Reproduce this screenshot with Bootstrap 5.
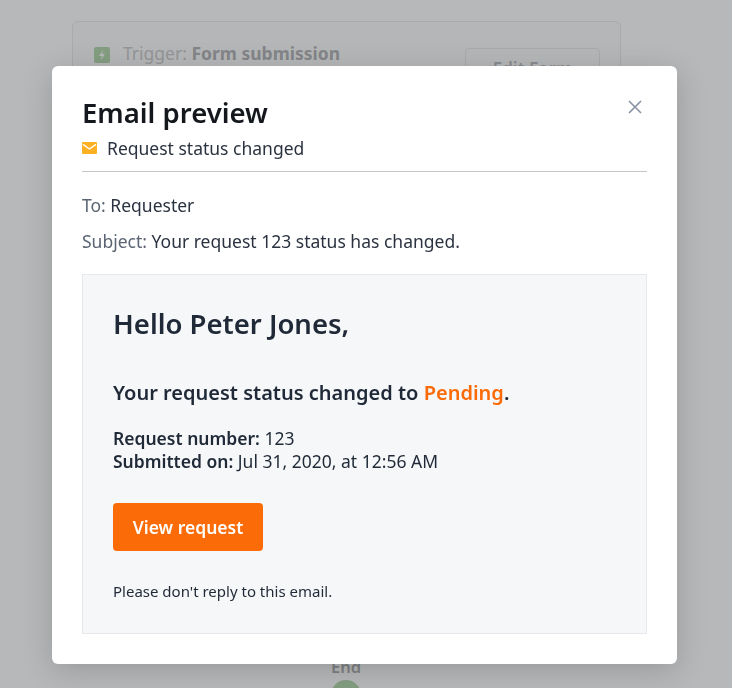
<!DOCTYPE html>
<html lang="en">
<head>
    <meta charset="UTF-8">
    <meta name="viewport" content="width=device-width, initial-scale=1.0">
    <title>Email preview</title>
    <link href="https://cdn.jsdelivr.net/npm/bootstrap@5.3.0/dist/css/bootstrap.min.css" rel="stylesheet">
    <style>
        html, body {
            height: 100%;
            overflow: hidden;
        }
        body {
            font-family: "Noto Sans", sans-serif;
            background: #fff;
            color: #1f2937;
        }
        .page-back {
            padding: 21px 111px 0 72px;
            height: 688px;
            opacity: 0.5;
        }
        .trigger-box {
            height: 200px;
            border: 1px solid #d5d7dc;
            border-radius: 6px;
            padding: 19px 20px;
            background: #fdfdfd;
        }
        .trigger-icon {
            width: 16px;
            height: 16px;
            background: #6cb560;
            border-radius: 2px;
            margin-top: 6px;
        }
        .trigger-label {
            font-size: 17.5px;
            line-height: 24px;
            color: #9a9ca1;
            gap: 13px;
            margin-left: 1px;
        }
        .trigger-label b {
            color: #696c72;
            font-weight: 700;
        }
        .edit-btn {
            width: 135px;
            height: 50px;
            margin-top: 7px;
            border: 1px solid #d5d7dc;
            border-radius: 4px;
            font-size: 17px;
            font-weight: 600;
            color: #7b7f88;
            text-align: center;
            padding-top: 7px;
        }
        .end-block {
            margin-top: 435px;
            font-size: 16.5px;
            font-weight: 600;
            line-height: 22px;
            color: #5b5f66;
            padding-left: 259px;
        }
        .end-dot {
            width: 30px;
            height: 30px;
            margin: 2px 0 0 0;
            background: #6cb560;
            border-radius: 50%;
        }
        .overlay {
            position: fixed;
            inset: 0;
            background: rgba(31, 33, 37, 0.32);
        }
        .preview-dialog {
            position: absolute;
            left: 52px;
            top: 66px;
            width: 625px;
            height: 598px;
            background: #fff;
            border-radius: 6px;
            padding: 29px 30px 30px;
            box-shadow: 0 6px 30px rgba(0, 0, 0, 0.18);
        }
        .preview-title {
            font-size: 27.5px;
            font-weight: 600;
            line-height: 36px;
            color: #14171c;
            margin: 0;
        }
        .preview-sub {
            font-size: 17.5px;
            line-height: 24px;
            margin-top: 5px;
            padding-bottom: 11px;
            border-bottom: 1px solid #c4c6cc;
            color: #2b3340;
            gap: 10px;
        }
        .close-x {
            position: absolute;
            top: 33px;
            left: 575px;
            background: none;
            border: 0;
            padding: 0;
            line-height: 0;
        }
        .meta-line {
            font-size: 17.5px;
            line-height: 24px;
            color: #2b3340;
        }
        .to-line {
            margin-top: 21px;
        }
        .subject-line {
            margin-top: 12px;
        }
        .meta-line span {
            color: #5b6472;
        }
        .mail-box {
            height: 360px;
            margin-top: 21px;
            padding: 31px 30px;
            background: #f6f7f9;
            border: 1px solid #e6e8ec;
        }
        .mail-hello {
            font-size: 27.5px;
            font-weight: 600;
            line-height: 36px;
            color: #1f2937;
            margin: 0;
        }
        .mail-status {
            font-size: 20px;
            font-weight: 600;
            line-height: 26px;
            margin: 38px 0 0;
        }
        .status-word {
            color: #fb6b07;
        }
        .mail-details {
            font-size: 17.5px;
            line-height: 23px;
            margin: 21px 0 0;
        }
        .mail-details b {
            font-weight: 600;
        }
        .view-btn {
            display: block;
            width: 150px;
            height: 48px;
            margin-top: 30px;
            border: 0;
            border-radius: 4px;
            background: #fb6b07;
            color: #fff;
            font-size: 17.5px;
            font-weight: 600;
        }
        .mail-foot {
            font-size: 15px;
            line-height: 20px;
            margin: 30px 0 0;
        }
    </style>
</head>
<body>

    <!-- page behind the dialog -->
    <div class="page-back">
        <div class="trigger-box d-flex justify-content-between">
            <div class="d-flex align-items-start trigger-label">
                <svg class="trigger-icon" viewBox="0 0 16 16"><path d="M9.5 2.5 5 9h3l-1.5 4.5L11 7H8z" fill="#fff"/></svg>
                <div>Trigger: <b>Form submission</b></div>
            </div>
            <div class="edit-btn">Edit Form</div>
        </div>
        <div class="end-block">
            <div>End</div>
            <div class="end-dot"></div>
        </div>
    </div>

    <div class="overlay">
        <div class="preview-dialog">
            <button class="close-x" aria-label="Close">
                <svg width="16" height="16" viewBox="0 0 16 16"><path d="M2 2l12 12M14 2 2 14" stroke="#8792a2" stroke-width="1.6" fill="none"/></svg>
            </button>
            <h1 class="preview-title">Email preview</h1>
            <div class="preview-sub d-flex align-items-center">
                <svg width="15" height="12" viewBox="0 0 15 12"><rect width="15" height="12" rx="1" fill="#fdb022"/><path d="M1 2.4 7.5 7 14 2.4" stroke="#fff" stroke-width="1.4" fill="none"/></svg>
                <span>Request status changed</span>
            </div>
            <div class="meta-line to-line"><span>To:</span> Requester</div>
            <div class="meta-line subject-line"><span>Subject:</span> Your request 123 status has changed.</div>
            <div class="mail-box">
                <h2 class="mail-hello">Hello Peter Jones,</h2>
                <p class="mail-status">Your request status changed to <span class="status-word">Pending</span>.</p>
                <p class="mail-details"><b>Request number:</b> 123<br><b>Submitted on:</b> Jul 31, 2020, at 12:56 AM</p>
                <button class="view-btn">View request</button>
                <p class="mail-foot">Please don't reply to this email.</p>
            </div>
        </div>
    </div>

    <script src="https://cdn.jsdelivr.net/npm/bootstrap@5.3.0/dist/js/bootstrap.bundle.min.js"></script>
</body>
</html>
